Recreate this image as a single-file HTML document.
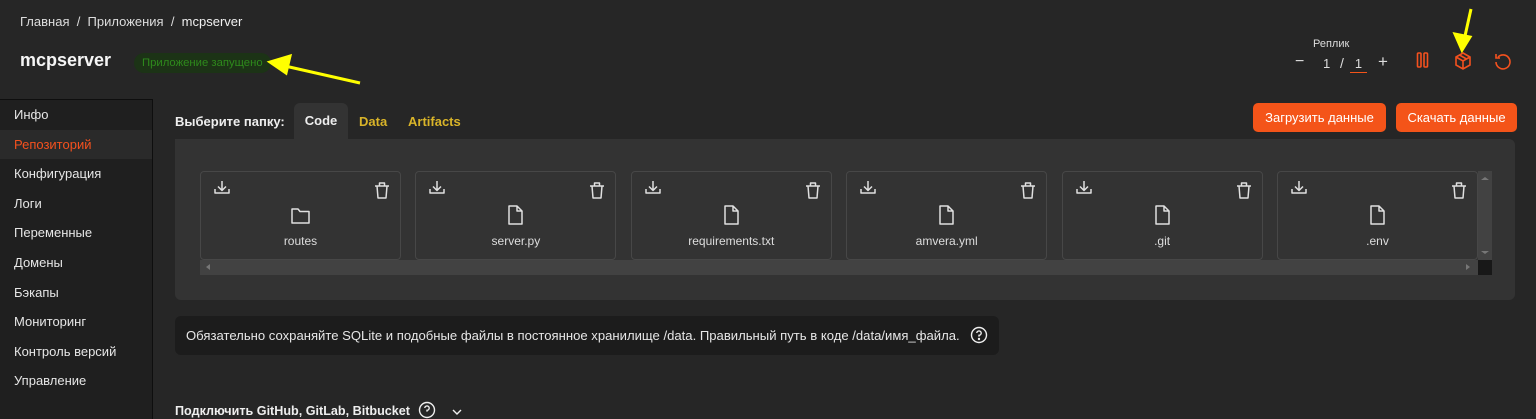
<!DOCTYPE html>
<html><head><meta charset="utf-8"><style>
*{box-sizing:border-box;margin:0;padding:0}
body{width:1536px;height:415px;overflow:hidden;background:#262626;font-family:"Liberation Sans",sans-serif;color:#e8e8e8;position:relative;font-size:13px}
.a{position:absolute}
.side{left:0;top:99px;width:153px;height:320px;background:#1f1f1f;border-right:1px solid #0e0e0e;border-top:1px solid #0e0e0e}
.side div{height:29.6px;line-height:29.6px;padding-left:14px;font-size:13px;color:#e6e6e6}
.card{position:absolute;top:171px;width:201px;height:89px;border:1px solid #474747;border-radius:4px;background:#333}
.card .n{position:absolute;top:62px;width:100%;text-align:center;font-size:12px;color:#ddd}
.btn{position:absolute;top:103px;height:29px;line-height:29px;background:#f45419;color:#fff;border-radius:5px;font-size:13px;text-align:center}
</style></head><body>
<div class="a" style="left:20px;top:14px;font-size:13px;color:#ddd">Главная &nbsp;/&nbsp; Приложения &nbsp;/&nbsp; <span style="color:#f0f0f0">mcpserver</span></div>
<div class="a" style="left:20px;top:50px;font-size:18px;font-weight:bold;color:#f5f5f5">mcpserver</div>
<div class="a" style="left:134px;top:53px;height:20px;line-height:20px;padding:0 8px;background:#1c3316;color:#2e8a1c;border-radius:10px;font-size:11.3px">Приложение запущено</div>
<div class="side a"><div>Инфо</div><div style="background:#2a2a2a;color:#f4511e">Репозиторий</div><div>Конфигурация</div><div>Логи</div><div>Переменные</div><div>Домены</div><div>Бэкапы</div><div>Мониторинг</div><div>Контроль версий</div><div>Управление</div></div>
<div class="a" style="left:1313px;top:38px;font-size:11px;color:#ddd">Реплик</div>
<div class="a" style="left:1295px;top:53px;font-size:16px;color:#ddd">−</div>
<div class="a" style="left:1323px;top:56px;font-size:13px;color:#ddd">1</div>
<div class="a" style="left:1340px;top:55px;font-size:14px;color:#ddd">/</div>
<div class="a" style="left:1350px;top:56px;width:17px;text-align:center;font-size:13px;color:#ddd;border-bottom:1px solid #f45419;height:17px">1</div>
<div class="a" style="left:1378px;top:52px;font-size:17px;color:#ddd">+</div>
<svg class="a" style="left:1410px;top:48px" width="110" height="26" fill="none" stroke="#f4511e" stroke-width="1.6">
<rect x="7.5" y="5" width="3.5" height="14" rx="1"/><rect x="14" y="5" width="3.5" height="14" rx="1"/>
<path d="M53 5l7 4v8l-7 4-7-4V9z M46 9l7 4 7-4 M53 13v8 M49.5 7l7 4"/>
<path d="M88 9a7 7 0 1 1-2 5 M86 6v4h4"/>
</svg>
<div class="a" style="left:175px;top:114px;font-size:13px;font-weight:bold;color:#eee">Выберите папку:</div>
<div class="a" style="left:294px;top:103px;width:54px;height:36px;background:#333;border-radius:6px 6px 0 0;text-align:center;line-height:36px;font-weight:bold;color:#eee">Code</div>
<div class="a" style="left:359px;top:114px;font-weight:bold;color:#d9b429">Data</div>
<div class="a" style="left:408px;top:114px;font-weight:bold;color:#d9b429">Artifacts</div>
<div class="btn" style="left:1253px;width:133px">Загрузить данные</div>
<div class="btn" style="left:1396px;width:121px">Скачать данные</div>
<div class="a" style="left:175px;top:139px;width:1340px;height:161px;background:#333;border-radius:0 6px 6px 6px"></div>
<div class="a" style="left:200px;top:260px;width:1278px;height:15px;background:#424242"></div>
<div class="a" style="left:1478px;top:171px;width:14px;height:89px;background:#424242"></div>
<div class="a" style="left:1478px;top:260px;width:14px;height:15px;background:#181818"></div>
<svg class="a" style="left:200px;top:171px" width="1292" height="104">
<path d="M6 96l4-3v6z M1270 96l-4-3v6z" fill="#777"/><path d="M1281 9l4-3 4 3z M1281 80l4 3 4-3z" fill="#777"/>
</svg>
<div id="cards"></div>
<script>
var names=["routes","server.py","requirements.txt","amvera.yml",".git",".env"];var h="";
names.forEach(function(n,i){var x=200+i*215.4;var ic=i==0?'<path d="M2 4h6l2 2.5h9v11.5H2z"/>':'<path d="M4 1h8l5 5v13H4z M12 1v5h5"/>';
h+='<div class="card" style="left:'+x+'px"><svg width="201" height="60" fill="none" stroke="#e0e0e0" stroke-width="1.5" stroke-linejoin="round" style="position:absolute;left:0;top:0"><path d="M21 9v9 M17 14.5l4 4 4-4 M14 17v4h14v-4"/><path d="M174 14h14 M176 14l1 12h8l1-12 M178.5 14v-3h5v3"/><g transform="translate(89,33)">'+ic+'</g></svg><div class="n">'+n+'</div></div>';});
document.getElementById("cards").innerHTML=h;
</script>
<div class="a" style="left:175px;top:316px;width:824px;height:39px;background:#1c1c1c;border-radius:6px;line-height:39px;padding-left:11px;font-size:13.1px;color:#e6e6e6;white-space:nowrap">Обязательно сохраняйте SQLite и подобные файлы в постоянное хранилище /data. Правильный путь в коде /data/имя_файла.</div>
<svg class="a" style="left:970px;top:326px" width="18" height="18" fill="none" stroke="#eee" stroke-width="1.4"><circle cx="9" cy="9" r="7.5"/><path d="M6.8 7a2.2 2.2 0 1 1 2.2 2.3v1.3"/><circle cx="9" cy="13" r=".5" fill="#eee"/></svg>
<div class="a" style="left:175px;top:404px;font-size:12.6px;font-weight:bold;color:#eee;white-space:nowrap">Подключить GitHub, GitLab, Bitbucket</div>
<svg class="a" style="left:418px;top:401px" width="50" height="18" fill="none" stroke="#eee" stroke-width="1.4"><circle cx="9" cy="9" r="7.5"/><path d="M6.8 7a2.2 2.2 0 1 1 2.2 2.3v1.3"/><path d="M35 9l4 4 4-4"/></svg>
<svg class="a" style="left:0;top:0" width="1536" height="415"><g stroke="#ffff00" stroke-width="3" fill="#ffff00"><path d="M360 83L285 66"/><path d="M270 62l20-6-4 17z"/><path d="M1471 9l-6 27"/><path d="M1462 50l-7-16 15 3z"/></g></svg>
</body></html>
